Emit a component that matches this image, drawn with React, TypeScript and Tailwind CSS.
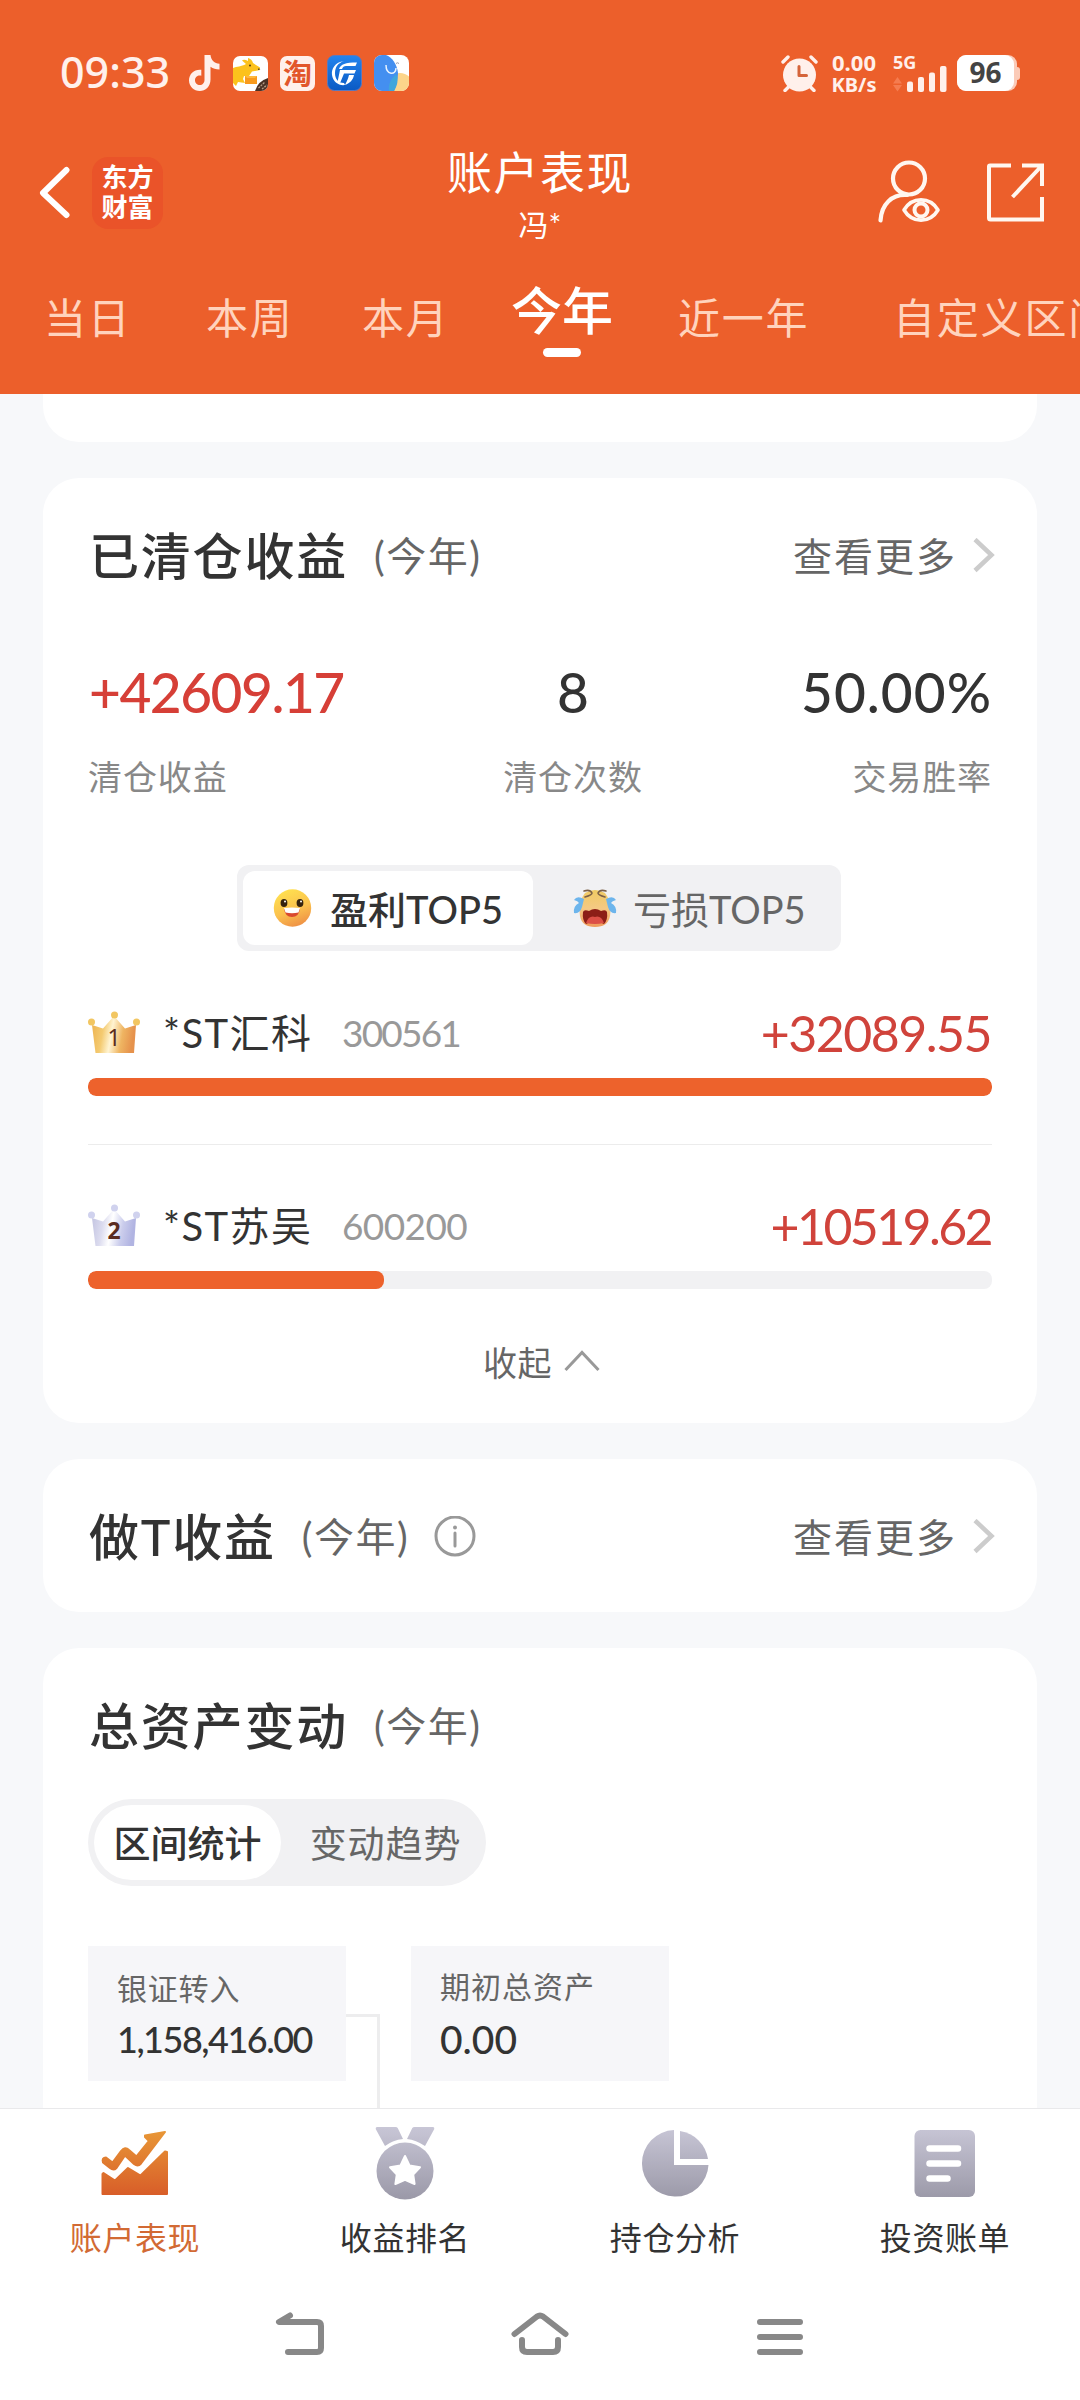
import type { ReactNode } from "react";
import clsx from "clsx";

const tabs = [
    { label: "当日", width: "w-[162px]" },
    { label: "本周", width: "w-[156px]" },
    { label: "本月", width: "w-[148px]" },
    { label: "今年", width: "w-[168px]", active: true },
    { label: "近一年", width: "w-[215px]" },
    { label: "自定义区间", width: "w-[260px]" },
];

const stocks = [
    { rank: 1, name: "*ST汇科", code: "300561", profit: "+32089.55", percent: 100, tracking: "tracking-[-1.500px]", codeTracking: "tracking-[-1.800px]" },
    { rank: 2, name: "*ST苏吴", code: "600200", profit: "+10519.62", percent: 32.75, tracking: "tracking-[-2.600px]", codeTracking: "tracking-[-0.600px]" },
];

function TikTokIcon() {
    return (
        <svg width="31" height="36" viewBox="0 0 31 36" className="shrink-0">
            <path
                d="M15.5 0H21.5C22 5 25.500 8.500 30.500 8.800V14.600C27 14.600 24 13.500 21.500 11.800V24.500C21.500 31.500 16.500 36 10.800 36C4.800 36 0 31.400 0 25.300C0 18.800 5.500 14 12.300 14.800V20.800C9 20 6 22 6 25.200C6 28 8.200 30.100 10.800 30.100C13.600 30.100 15.500 28 15.500 24.800Z"
                fill="#fff0eb"
            />
        </svg>
    );
}

function KangarooIcon() {
    return (
        <svg width="35" height="35" viewBox="0 0 35 35" className="shrink-0">
            <defs>
                <clipPath id="roo"><rect width="35" height="35" rx="7" /></clipPath>
            </defs>
            <g clipPath="url(#roo)">
                <rect width="35" height="35" fill="#fff" />
                <path d="M0 12C4 10 8 11 13 8L9 4.500Q11 3 15 5L15 2Q19 3 20 7L27 11.500L27 14L19 15.500L16 20H11L10 23L12 27L5 26L3 30L0 27Z" fill="#fcc21c" />
                <path d="M12 20H24V28H12Z" fill="#f99a1c" />
                <path d="M12 20H24L22 22H14Z" fill="#ffb83d" />
                <circle cx="17" cy="9.500" r="1" fill="#553a12" />
                <path d="M25 12.500L27.500 13L25 14Z" fill="#333" />
                <path d="M35 22Q25 25 22 35H35Z" fill="#4a3125" />
                <path d="M25.500 32L32 26M29 33L34 29" stroke="#b79c85" strokeWidth="1.300" strokeDasharray="2 1" />
            </g>
        </svg>
    );
}

function BrokerIcon() {
    return (
        <svg width="35" height="36" viewBox="0 0 35 36" className="shrink-0">
            <defs>
                <linearGradient id="broker" x1="0" y1="0" x2="0" y2="1">
                    <stop offset="0" stopColor="#2384ee" />
                    <stop offset="1" stopColor="#0b5ac4" />
                </linearGradient>
            </defs>
            <rect x=".5" y=".5" width="34" height="35" rx="7" fill="url(#broker)" stroke="#5c78bd" />
            <path d="M17 6C8 7 4 14 5 20C6 27 12 31 18 30L17 28C11 28 8 24 8 18C8 12 11 8 17 6Z" fill="#fff" />
            <path d="M12 14C14 9 18 7.500 30 7.500L28.500 11H19Q16 11 15 14Z" fill="#fff" />
            <path d="M13 15H29L27.500 18.500H17L13.500 27H10.500Z" fill="#fff" />
            <path d="M22 20H27C26 25 23 28 18 30C20 26 21 24 22 20Z" fill="#fff" />
        </svg>
    );
}

function ElephantIcon() {
    return (
        <svg width="35" height="36" viewBox="0 0 35 36" className="shrink-0">
            <defs>
                <clipPath id="elephant"><rect width="35" height="36" rx="8" /></clipPath>
            </defs>
            <g clipPath="url(#elephant)">
                <rect width="35" height="36" fill="#fff" />
                <circle cx="26" cy="31" r="13" fill="#fcd58a" />
                <path d="M0 0H12C18 2 23 9 24 18C24 25 22 31 20 36H0Z" fill="#448ff0" />
                <path d="M22 19C25 25 23 31 20 36H15C14 29 17 24 22 19Z" fill="#3fa6dc" />
                <path d="M12 10C12 20 22 21 22 13" fill="none" stroke="#e8f3ff" strokeWidth="1.500" />
                <path d="M22 8.500Q23.500 7 25 8.500" fill="none" stroke="#99a" />
            </g>
        </svg>
    );
}

function AlarmIcon() {
    return (
        <svg width="37" height="37" viewBox="0 0 37 37" className="shrink-0">
            <g stroke="#fff0eb" strokeWidth="3.400" strokeLinecap="round">
                <path d="M2 7L7 2M35 7L30 2M4 35.500L8 31.500M33 35.500L29 31.500" />
            </g>
            <circle cx="18.500" cy="20" r="16.500" fill="#fff0eb" />
            <path d="M18 11.500V20.500H25.500" fill="none" stroke="#d5643a" strokeWidth="3" strokeLinecap="round" strokeLinejoin="round" />
        </svg>
    );
}

function SignalIcon() {
    return (
        <svg width="54" height="26" viewBox="0 0 54 26">
            <path d="M4.500 11L9 17.500H0ZM4.500 25.500L9 19H0Z" fill="#f57c50" />
            <g fill="#fff0eb">
                <rect x="14" y="15.500" width="6" height="10.500" rx="2" />
                <rect x="25" y="11" width="6" height="15" rx="2" />
                <rect x="36" y="6.500" width="6" height="19.500" rx="2" />
                <rect x="47" y="0" width="6.500" height="26" rx="2" />
            </g>
        </svg>
    );
}

function StatusBar() {
    return (
        <div className="flex h-[146px] items-center pl-[60px] font-['Noto_Sans','Noto_Sans_CJK_SC',sans-serif] text-[#fff0eb]">
            <span className="w-[129px] pb-[3px] text-[43px] font-medium leading-none">09:33</span>
            <div className="flex items-center gap-[12px]">
                <div className="mr-[1px]"><TikTokIcon /></div>
                <KangarooIcon />
                <div className="flex size-[35px] items-center justify-center rounded-[7px] bg-[#fff0eb] pb-[2px] font-['Noto_Sans_CJK_SC',sans-serif] text-[29px] font-bold leading-none text-[#e2562b]">淘</div>
                <BrokerIcon />
                <ElephantIcon />
            </div>
            <div className="ml-auto flex items-center pr-[60px]">
                <AlarmIcon />
                <div className="ml-[9px] flex w-[54px] flex-col items-center gap-[1px] font-bold">
                    <div className="text-[22px] leading-[22px]">0.00</div>
                    <div className="text-[20px] leading-[22px]">KB/s</div>
                </div>
                <div className="ml-[12px] flex w-[54px] flex-col">
                    <span className="h-[11px] text-[18px] font-bold leading-[15px]">5G</span>
                    <SignalIcon />
                </div>
                <div className="ml-[10px] flex h-[36px] w-[60px] rounded-[9px] bg-[#fbcbb8] pr-[3px]">
                    <div className="flex flex-1 items-center justify-center rounded-[9px] bg-white pb-[2px] text-[28px] font-bold leading-none text-[#444]">96</div>
                </div>
                <div className="h-[13px] w-[3px] rounded-r-[3px] bg-[#fbcbb8]" />
            </div>
        </div>
    );
}

function TitleBar() {
    return (
        <div className="flex h-[116px] items-center">
            <div className="flex w-[340px] items-center pl-[38px] pb-[22px]">
                <svg width="34" height="54" viewBox="0 0 34 54" fill="none" stroke="#fff" strokeWidth="6" strokeLinecap="round" strokeLinejoin="round">
                    <path d="M28.500 4L5 27L28.500 49" />
                </svg>
                <div className="ml-[20px] flex h-[72px] w-[71px] flex-col items-center justify-center rounded-[16px] bg-[#ea5329] pb-[2px] text-[26px] font-bold leading-[30px] text-white">
                    <span>东方</span>
                    <span>财富</span>
                </div>
            </div>
            <div className="flex flex-1 flex-col items-center pb-[12px] text-white">
                <h1 className="text-[45px] leading-[52px] tracking-[1.500px]">账户表现</h1>
                <p className="text-[30px] leading-[50px]">冯*</p>
            </div>
            <div className="flex w-[340px] items-center justify-end pr-[35px] pb-[24px]">
                <svg width="64" height="64" viewBox="0 0 64 64" fill="none" stroke="#fff7f0" strokeWidth="4.200" strokeLinecap="round">
                    <circle cx="32" cy="18.500" r="16" />
                    <path d="M3.500 60.500C4.500 44 15 34 30 35" />
                    <path d="M27 50C35 36.500 53 36.500 61 50C53 63.500 35 63.500 27 50Z" strokeWidth="3.600" strokeLinejoin="round" />
                    <circle cx="44" cy="50" r="6.500" strokeWidth="4" />
                </svg>
                <svg width="60" height="60" viewBox="0 0 60 60" fill="none" stroke="#fff7f0" strokeWidth="4" className="ml-[44px]">
                    <path d="M26 3.500H5Q4 3.500 4 4.500V56Q4 57.500 5.500 57.500H57V35" />
                    <path d="M37 3.500H57V24M56.500 4L27.500 35" />
                </svg>
            </div>
        </div>
    );
}

function Header() {
    return (
        <header className="flex h-[394px] shrink-0 flex-col overflow-hidden bg-[#ec5f2b]">
            <StatusBar />
            <TitleBar />
            <nav className="flex h-[132px] pl-[44px]">
                {tabs.map((tab) => (
                    <div key={tab.label} className={clsx("shrink-0 whitespace-nowrap", tab.width)}>
                        {tab.active ? (
                            <div className="flex w-[104px] flex-col items-center pt-[21px] text-white">
                                <span className="text-[51px] font-medium leading-[56px]">{tab.label}</span>
                                <span className="mt-[9px] h-[9px] w-[38px] rounded-full bg-white" />
                            </div>
                        ) : (
                            <div className="pt-[30px] text-[42px] leading-[52px] tracking-[1.800px] text-[#ffd3bd]">{tab.label}</div>
                        )}
                    </div>
                ))}
            </nav>
        </header>
    );
}

function CardHeader({ title, more, children }: { title: string; more?: boolean; children?: ReactNode }) {
    return (
        <div className="flex h-[60px] items-center pl-[1px]">
            <h2 className="text-[50px] font-medium leading-[60px] tracking-[1.800px] text-[#333]">{title}</h2>
            <span className="ml-[26px] text-[40px] leading-[60px] tracking-[1.500px] text-[#666]">(今年)</span>
            {children}
            {more && (
                <div className="ml-auto -mr-[4px] flex items-center text-[39px] leading-[60px] tracking-[2px] text-[#666]">
                    查看更多
                    <svg width="24" height="36" viewBox="0 0 24 36" fill="none" stroke="#ccc" strokeWidth="4.500" className="ml-[15px]">
                        <path d="M3 1.500L19.500 17L3 32.500" />
                    </svg>
                </div>
            )}
        </div>
    );
}

function HappyFace() {
    return (
        <svg width="40" height="40" viewBox="0 0 40 40">
            <defs>
                <linearGradient id="happy" x1=".3" y1="0" x2=".7" y2="1">
                    <stop offset="0" stopColor="#ffe14f" />
                    <stop offset=".55" stopColor="#fbc14e" />
                    <stop offset="1" stopColor="#ee8e45" />
                </linearGradient>
            </defs>
            <circle cx="20.500" cy="20" r="18.700" fill="url(#happy)" />
            <ellipse cx="12" cy="15" rx="3.400" ry="4" fill="#35230f" />
            <ellipse cx="28" cy="15" rx="3.400" ry="4" fill="#35230f" />
            <circle cx="13" cy="13.500" r="1" fill="#fff" />
            <circle cx="29" cy="13.500" r="1" fill="#fff" />
            <path d="M12 20.500Q20 22.500 28 20.500Q27 29 20 29Q13 29 12 20.500Z" fill="#d9492f" />
            <path d="M12 20Q20 19 28 20L26.500 24.500Q20 26 13.500 24.500Z" fill="#fff" />
        </svg>
    );
}

function CryingFace() {
    return (
        <svg width="46" height="40" viewBox="0 0 46 40">
            <defs>
                <linearGradient id="crying" x1="0" y1="0" x2="0" y2="1">
                    <stop offset="0" stopColor="#efca62" />
                    <stop offset=".5" stopColor="#f5c984" />
                    <stop offset="1" stopColor="#f09a5a" />
                </linearGradient>
            </defs>
            <path d="M13 5Q23 -1 33 5Q40 14 38 28Q36 39 23 39Q10 39 8 28Q6 14 13 5Z" fill="url(#crying)" />
            <path d="M12 3Q18 1 20 5Q20 7 13 9M34 3Q28 1 26 5Q26 7 33 9" fill="none" stroke="#7b6048" strokeWidth="1.600" strokeLinecap="round" />
            <path d="M12 11Q5 7 2 12Q6 13 7 15Q1 18 2 25Q8 26 10 19Z" fill="#6db5ec" />
            <path d="M34 11Q41 7 44 12Q40 13 39 15Q45 18 44 25Q38 26 36 19Z" fill="#6db5ec" />
            <path d="M11 24Q12 21 17 23Q23 19 29 23Q34 21 35 24Q36 32 32 36Q29 34 23 34Q17 34 14 36Q10 32 11 24Z" fill="#8c1e17" />
            <path d="M14 35Q17 27 23 29Q29 27 32 35Q23 37 14 35Z" fill="#dc4f46" />
        </svg>
    );
}

function Crown({ rank }: { rank: number }) {
    const gold = rank === 1;
    const id = `crown-${rank}`;
    return (
        <svg width="52" height="42" viewBox="0 0 52 42" className="-mt-[2px] shrink-0">
            <defs>
                <linearGradient id={id} x1="0" y1="0" x2="1" y2=".15">
                    <stop offset=".05" stopColor={gold ? "#eeb552" : "#c5c6e2"} />
                    <stop offset=".3" stopColor={gold ? "#f4cb72" : "#dcdcef"} />
                    <stop offset=".5" stopColor={gold ? "#fff4d2" : "#ffffff"} />
                    <stop offset=".75" stopColor={gold ? "#efb562" : "#cbcdec"} />
                    <stop offset="1" stopColor={gold ? "#e6924c" : "#b1b4e2"} />
                </linearGradient>
            </defs>
            <path d="M4 14L15 17.500L26 5L37 17.500L48 14L46 42H7.500Z" fill={`url(#${id})`} />
            <g fill={gold ? "#f2c661" : "#d0d2ee"}>
                <circle cx="3.500" cy="11" r="3.500" />
                <circle cx="26.500" cy="4" r="3.500" />
                <circle cx="48.500" cy="11" r="3.500" />
            </g>
            <text x="26" y="35" textAnchor="middle" fontSize="23" fontWeight={gold ? 400 : 700} fill="#5a2c21" className="font-['Noto_Sans']">{rank}</text>
        </svg>
    );
}

function Stat({ value, label, tracking, className }: { value: string; label: string; tracking?: string; className: string }) {
    return (
        <div className={clsx("flex flex-1 flex-col", className)}>
            <span className={clsx("text-[55px] font-medium leading-[60px]", tracking)}>{value}</span>
            <span className="mt-[30px] text-[34px] leading-[50px] tracking-[0.900px] text-[#888]">{label}</span>
        </div>
    );
}

function ClearedCard() {
    return (
        <section className="h-[945px] rounded-[36px] bg-white px-[45px] pt-[48px]">
            <CardHeader title="已清仓收益" more />
            <div className="mt-[76px] flex">
                <Stat value="+42609.17" label="清仓收益" tracking="ml-[1px] tracking-[-1.500px]" className="items-start text-[#d63f37]" />
                <Stat value="8" label="清仓次数" className="items-center pl-[66px] text-[#333]" />
                <Stat value="50.00%" label="交易胜率" tracking="tracking-[1px]" className="items-end text-[#333]" />
            </div>
            <div className="mx-auto mt-[63px] flex h-[86px] w-[604px] -translate-x-px rounded-[12px] bg-[#f1f1f3] p-[6px] text-[38px] leading-[74px]">
                <div className="flex w-[290px] items-center rounded-[12px] bg-white pl-[29px] font-medium text-[#333]">
                    <HappyFace />
                    <span className="ml-[18px] pt-[1px]">盈利TOP5</span>
                </div>
                <div className="flex items-center pl-[39px] text-[#666]">
                    <CryingFace />
                    <span className="ml-[15px] pt-[1px]">亏损TOP5</span>
                </div>
            </div>
            {stocks.map((stock, i) => (
                <div key={stock.rank} className={clsx(i === 0 ? "mt-[52px] h-[142px] border-b border-[#ececec]" : "mt-[51px]")}>
                    <div className="flex h-[60px] items-center">
                        <Crown rank={stock.rank} />
                        <span className="ml-[23px] w-[179px] text-[40px] leading-[60px] tracking-[1.400px] text-[#333]">{stock.name}</span>
                        <span className={clsx("text-[37px] leading-[60px] text-[#999]", stock.codeTracking)}>{stock.code}</span>
                        <span className={clsx("mr-[1px] ml-auto text-[50px] leading-[62px] text-[#d0433b]", stock.tracking)}>{stock.profit}</span>
                    </div>
                    <div className="mt-[15px] h-[18px] overflow-hidden rounded-[8px] bg-[#f1f1f3]">
                        <div className="h-full rounded-[8px] bg-[#ed622c]" style={{ width: `${stock.percent}%` }} />
                    </div>
                </div>
            ))}
            <div className="mt-[48px] flex h-[52px] items-center justify-center pl-[3px] text-[34px] leading-[52px] tracking-[0.500px] text-[#666]">
                收起
                <svg width="36" height="22" viewBox="0 0 36 22" fill="none" stroke="#999" strokeWidth="3" className="mb-[5px] ml-[12px]">
                    <path d="M1.500 20L18 2.500L34.500 20" />
                </svg>
            </div>
        </section>
    );
}

function AssetCard() {
    return (
        <section className="flex-1 overflow-hidden rounded-t-[36px] bg-white px-[45px] pt-[48px]">
            <CardHeader title="总资产变动" />
            <div className="mt-[43px] flex h-[87px] w-[398px] rounded-full bg-[#f1f1f3] p-[6px] text-[37px] leading-[77px]">
                <span className="w-[187px] rounded-full bg-white text-center font-medium text-[#333]">区间统计</span>
                <span className="flex-1 pl-[10px] text-center tracking-[0.900px] text-[#666]">变动趋势</span>
            </div>
            <div className="mt-[60px] flex">
                <div className="h-[135px] w-[258px] bg-[#f6f6f9] px-[29px] pt-[22px]">
                    <div className="text-[30px] leading-[40px] tracking-[0.800px] text-[#666]">银证转入</div>
                    <div className="mt-[11px] text-[36px] font-medium leading-[40px] tracking-[-1.500px] text-[#333]">1,158,416.00</div>
                </div>
                <div className="mt-[68px] h-[100px] w-[34px] border-t-[3px] border-r-[3px] border-[#ededee]" />
                <div className="ml-[31px] h-[135px] w-[258px] bg-[#f6f6f9] px-[29px] pt-[20px]">
                    <div className="text-[30px] leading-[40px] tracking-[1px] text-[#666]">期初总资产</div>
                    <div className="mt-[13px] text-[39px] font-medium leading-[40px] text-[#333]">0.00</div>
                </div>
            </div>
        </section>
    );
}

function IconGradient({ id, from = "#c8c6d6", to = "#9b99a8" }: { id: string; from?: string; to?: string }) {
    return (
        <defs>
            <linearGradient id={id} x1="0" y1="0" x2="0" y2="72" gradientUnits="userSpaceOnUse">
                <stop offset="0" stopColor={from} />
                <stop offset="1" stopColor={to} />
            </linearGradient>
        </defs>
    );
}

function ChartIcon() {
    return (
        <svg width="72" height="76" viewBox="0 0 72 76">
            <IconGradient id="nav-chart" from="#e99a37" to="#d75a28" />
            <g fill="url(#nav-chart)" stroke="url(#nav-chart)" strokeWidth="2" strokeLinejoin="round">
                <path d="M3.500 47L4.500 46L16 53.500L29 41L41.500 48.500L66 24.500L68 25V67H3.500Z" />
                <path d="M7 30.500L13.500 35.500L22 24Q26 19 30 23L37.500 29.500L50 14L46 10V8.500L66 5L42 36.500Q39 40 35 37L26 28.500L17.500 41Q14.500 44 11 41L4 35.500Q2.500 30.500 7 30.500Z" />
            </g>
        </svg>
    );
}

function MedalIcon() {
    return (
        <svg width="72" height="76" viewBox="0 0 72 76">
            <IconGradient id="nav-medal" />
            <g fill="url(#nav-medal)">
                <path d="M8 0H26.500Q28 0 28.700 1L34 12Q24 13 16 19L6.700 2Q6.500 0 8 0Z" />
                <path d="M64 0H45.500Q44 0 43.300 1L38 12Q47 13 56 19L65.300 2Q65.500 0 64 0Z" />
                <circle cx="36" cy="44" r="28.500" />
            </g>
            <path d="M36 29L40.500 38.500L51 40.300L44.200 47.500L45.600 57L36 52.800L26.400 57L27.800 47.500L21 40.300L31.500 38.500Z" fill="#fff" stroke="#fff" strokeWidth="2" strokeLinejoin="round" />
        </svg>
    );
}

function PieIcon() {
    return (
        <svg width="72" height="76" viewBox="0 0 72 76">
            <IconGradient id="nav-pie" />
            <g fill="url(#nav-pie)">
                <path d="M35 3V38H69.500A33.300 33.300 0 1 1 35 3Z" />
                <path d="M41 4A33.300 33.300 0 0 1 69 32H41Z" />
            </g>
        </svg>
    );
}

function BillIcon() {
    return (
        <svg width="72" height="76" viewBox="0 0 72 76">
            <IconGradient id="nav-bill" />
            <rect x="5.500" y="3" width="60.500" height="67" rx="6" fill="url(#nav-bill)" />
            <path d="M20.500 21.500H49M20.500 36.500H49M20.500 51.500H38.500" stroke="#fff" strokeWidth="6.500" strokeLinecap="round" />
        </svg>
    );
}

const navItems = [
    { label: "账户表现", icon: <ChartIcon />, active: true },
    { label: "收益排名", icon: <MedalIcon /> },
    { label: "持仓分析", icon: <PieIcon /> },
    { label: "投资账单", icon: <BillIcon /> },
];

function BottomNav() {
    return (
        <nav className="flex h-[180px] shrink-0 border-t border-[#e9e9eb] bg-white">
            {navItems.map((item) => (
                <div key={item.label} className="flex flex-1 flex-col items-center pt-[18px]">
                    {item.icon}
                    <span className={clsx("mt-[14px] text-[32px] leading-[42px] tracking-[0.600px]", item.active ? "text-[#d26a34]" : "text-[#333]")}>
                        {item.label}
                    </span>
                </div>
            ))}
        </nav>
    );
}

function SystemNav() {
    return (
        <div className="flex flex-1 items-start justify-center gap-[180px] bg-white pt-[20px]">
            <svg width="60" height="54" viewBox="0 0 60 54" fill="none" stroke="#888" strokeWidth="6" strokeLinecap="round" strokeLinejoin="round">
                <path d="M20 7.500L9 14H47Q51 14 51 18V40Q51 44 47 44H18" />
            </svg>
            <svg width="60" height="54" viewBox="0 0 60 54" fill="none" stroke="#888" strokeWidth="6" strokeLinecap="round" strokeLinejoin="round">
                <path d="M4.500 26L27 8.500Q30 6.500 33 8.500L55.500 26" />
                <path d="M12 32V39Q12 44 17 44H43Q48 44 48 39V32" />
            </svg>
            <svg width="60" height="54" viewBox="0 0 60 54" fill="none" stroke="#888" strokeWidth="6" strokeLinecap="round">
                <path d="M10 14H50M10 29H50M10 44H50" />
            </svg>
        </div>
    );
}

export default function App() {
    return (
        <div className="flex h-[2400px] w-[1080px] flex-col overflow-hidden bg-[#f7f8fa] font-[Lato,'Noto_Sans_CJK_SC',sans-serif]">
            <Header />
            <main className="flex h-[1714px] shrink-0 flex-col gap-[36px] overflow-hidden px-[43px]">
                <section className="h-[48px] shrink-0 rounded-b-[36px] bg-white" />
                <ClearedCard />
                <section className="h-[153px] shrink-0 rounded-[36px] bg-white px-[45px] pt-[48px]">
                    <CardHeader title="做T收益" more>
                        <svg width="42" height="42" viewBox="0 0 42 42" className="ml-[25px]">
                            <circle cx="21" cy="20" r="19" fill="none" stroke="#999" strokeWidth="3" />
                            <circle cx="21" cy="11.500" r="2" fill="#999" />
                            <path d="M21 17V30" stroke="#999" strokeWidth="3" strokeLinecap="round" />
                        </svg>
                    </CardHeader>
                </section>
                <AssetCard />
            </main>
            <BottomNav />
            <SystemNav />
        </div>
    );
}
